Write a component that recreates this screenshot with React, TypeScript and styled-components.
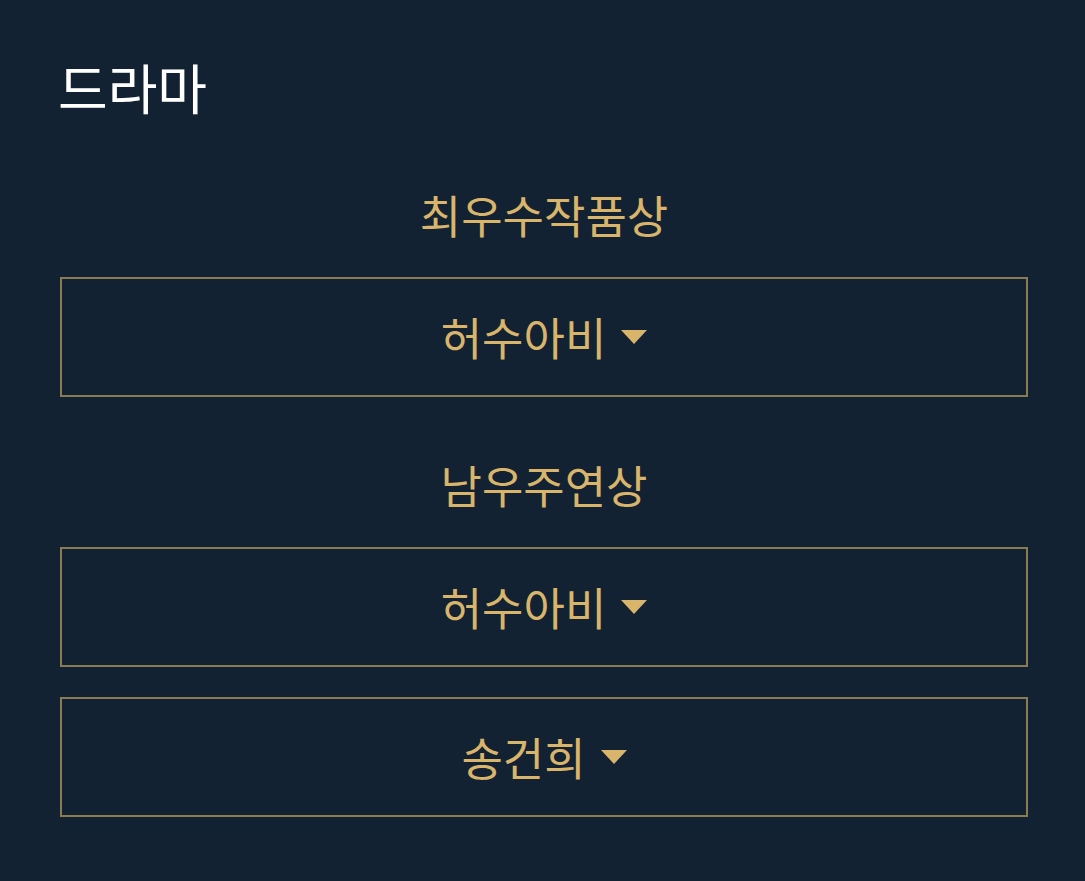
import styled, { createGlobalStyle } from "styled-components";

const GlobalStyle = createGlobalStyle`
  html, body {
    margin: 0;
    padding: 0;
    background: #132232;
  }
  body {
    font-family: "Noto Sans CJK KR", "Noto Sans", sans-serif;
  }
`;

type Award = {
  title?: string;
  picks: string[];
};

const awards: Award[] = [
  { title: "최우수작품상", picks: ["허수아비"] },
  { title: "남우주연상", picks: ["허수아비", "송건희"] },
];

const Caret = () => (
  <svg width="26" height="14" viewBox="0 0 26 14" aria-hidden="true">
    <path d="M0 0 H26 L13 14 Z" fill="#d8b56b" />
  </svg>
);

const App = () => {
  return (
    <Page>
      <GlobalStyle />
      <Heading>드라마</Heading>
      {awards.map((award) => (
        <Section key={award.title}>
          <Label>{award.title}</Label>
          <Picks>
            {award.picks.map((pick, i) => (
              <SelectBox key={i} type="button">
                <span>{pick}</span>
                <Caret />
              </SelectBox>
            ))}
          </Picks>
        </Section>
      ))}
    </Page>
  );
};

const Page = styled.div`
  width: 100%;
  min-height: 881px;
  box-sizing: border-box;
  padding: 57px 57px 0 60px;
  display: flex;
  flex-direction: column;
`;

const Heading = styled.h2`
  margin: 0 0 68px -2px;
  font-size: 54px;
  line-height: 60px;
  font-weight: 400;
  color: #ffffff;
`;

const Section = styled.section`
  display: flex;
  flex-direction: column;
  margin-bottom: 58px;
`;

const Label = styled.h3`
  margin: 0 0 32px;
  font-size: 45px;
  line-height: 60px;
  font-weight: 400;
  text-align: center;
  color: #d8b56b;
`;

const Picks = styled.div`
  display: flex;
  flex-direction: column;
  gap: 30px;
`;

const SelectBox = styled.button`
  height: 120px;
  width: 968px;
  box-sizing: border-box;
  border: 2px solid #8a7c52;
  background: transparent;
  display: flex;
  align-items: center;
  justify-content: center;
  gap: 15px;
  padding: 0;
  font-family: inherit;
  font-size: 45px;
  color: #d8b56b;
  cursor: pointer;
  span {
    line-height: 60px;
  }
`;

export default App;
